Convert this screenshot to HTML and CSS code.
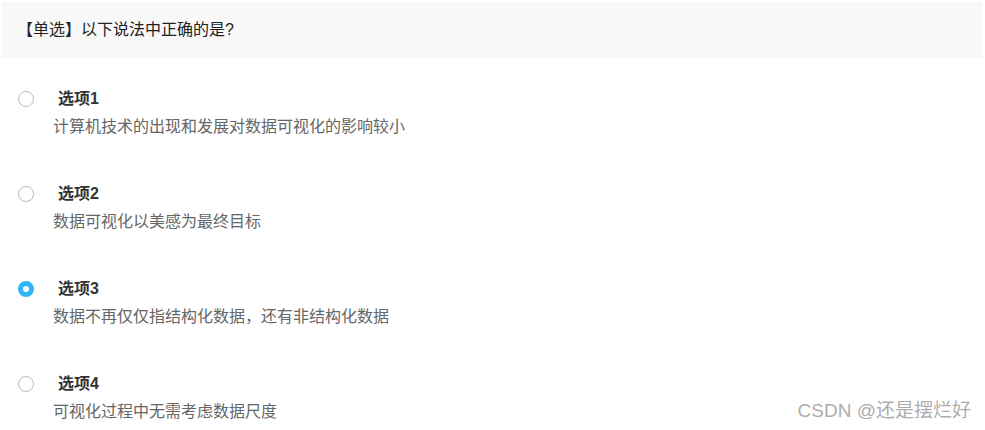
FILE: index.html
```html
<!DOCTYPE html>
<html lang="zh">
<head>
<meta charset="utf-8">
<link rel="stylesheet" href="styles.css">
</head>
<body>
<div class="page">
  <div class="question">【单选】以下说法中正确的是?</div>
  <div class="options">
    <div class="option">
      <span class="radio"></span>
      <div class="body">
        <div class="title">选项1</div>
        <div class="desc">计算机技术的出现和发展对数据可视化的影响较小</div>
      </div>
    </div>
    <div class="option">
      <span class="radio"></span>
      <div class="body">
        <div class="title">选项2</div>
        <div class="desc">数据可视化以美感为最终目标</div>
      </div>
    </div>
    <div class="option">
      <span class="radio checked"></span>
      <div class="body">
        <div class="title">选项3</div>
        <div class="desc">数据不再仅仅指结构化数据，还有非结构化数据</div>
      </div>
    </div>
    <div class="option">
      <span class="radio"></span>
      <div class="body">
        <div class="title">选项4</div>
        <div class="desc">可视化过程中无需考虑数据尺度</div>
      </div>
    </div>
  </div>
  <div class="watermark">CSDN @还是摆烂好</div>
</div>
</body>
</html>
```
FILE: styles.css
```css
html, body {
  margin: 0;
  padding: 0;
  background: #fff;
}
body {
  font-family: "Liberation Sans", "Noto Sans CJK SC", sans-serif;
  font-size: 16px;
  color: #333;
}
.page {
  position: relative;
  width: 985px;
  height: 430px;
  padding: 2px 3px 0 2px;
  box-sizing: border-box;
  overflow: hidden;
}
.question {
  height: 56px;
  line-height: 56px;
  background: #f8f8f8;
  padding-left: 15px;
  color: #222;
}
.options {
  display: flex;
  flex-direction: column;
  gap: 47px;
  padding-top: 31px;
}
.option {
  display: flex;
  align-items: flex-start;
  padding-left: 16px;
}
.radio {
  width: 16px;
  height: 16px;
  box-sizing: border-box;
  border: 1px solid #bbb;
  border-radius: 50%;
  margin-top: 2px;
  background: #fff;
  flex: none;
}
.radio.checked {
  border: 5px solid #2db7f5;
}
.body {
  margin-left: 19px;
}
.title {
  line-height: 20px;
  font-weight: bold;
  color: #333;
  padding-left: 5px;
}
.desc {
  margin-top: 8px;
  line-height: 20px;
  color: #666;
}
.watermark {
  position: absolute;
  right: 14px;
  bottom: 8px;
  font-size: 19px;
  color: rgba(150, 150, 150, 0.8);
}
```
